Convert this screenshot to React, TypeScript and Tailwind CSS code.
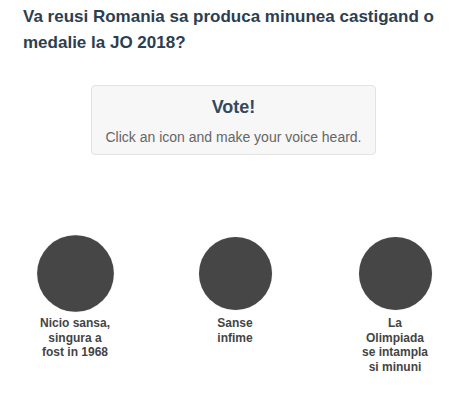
import React from "react";

const options = [
  { id: 1, label: "Nicio sansa, singura a fost in 1968", hover: true },
  { id: 2, label: "Sanse infime", hover: false },
  { id: 3, label: "La Olimpiada se intampla si minuni", hover: false },
];

const App = () => {
  return (
    <div className="w-[471px] h-[401px] bg-white font-['Liberation_Sans',Arial,sans-serif] overflow-hidden">
      <div className="px-[23px] pt-[4px]">
        <h3 className="text-[17px] leading-[26px] font-bold text-[#2c3e50]">
          Va reusi Romania sa produca minunea castigand o medalie la JO 2018?
        </h3>
      </div>

      <div className="mt-[29px] ml-[91px] w-[285px] h-[70px] bg-[#f7f7f7] border border-[#e3e3e3] rounded-[4px] pt-[11px] text-center">
        <div className="text-[18px] leading-[20px] font-bold text-[#34495e]">
          Vote!
        </div>
        <div className="mt-[10px] text-[14px] leading-[20px] text-[#666666]">
          Click an icon and make your voice heard.
        </div>
      </div>

      <div className="mt-[82px] flex gap-[10px]">
        {options.map((o) => (
          <div key={o.id} className="w-[150px] flex flex-col items-center">
            <button
              className={
                "w-[73px] h-[73px] rounded-full bg-[#464646] shadow-[0_0_1px_#bbb] " +
                (o.hover ? "scale-[1.05]" : "")
              }
            />
            <div className="mt-[6px] w-[74px] text-center text-[12px] leading-[14.5px] font-bold text-[#444444]">
              {o.label}
            </div>
          </div>
        ))}
      </div>
    </div>
  );
};

export default App;
